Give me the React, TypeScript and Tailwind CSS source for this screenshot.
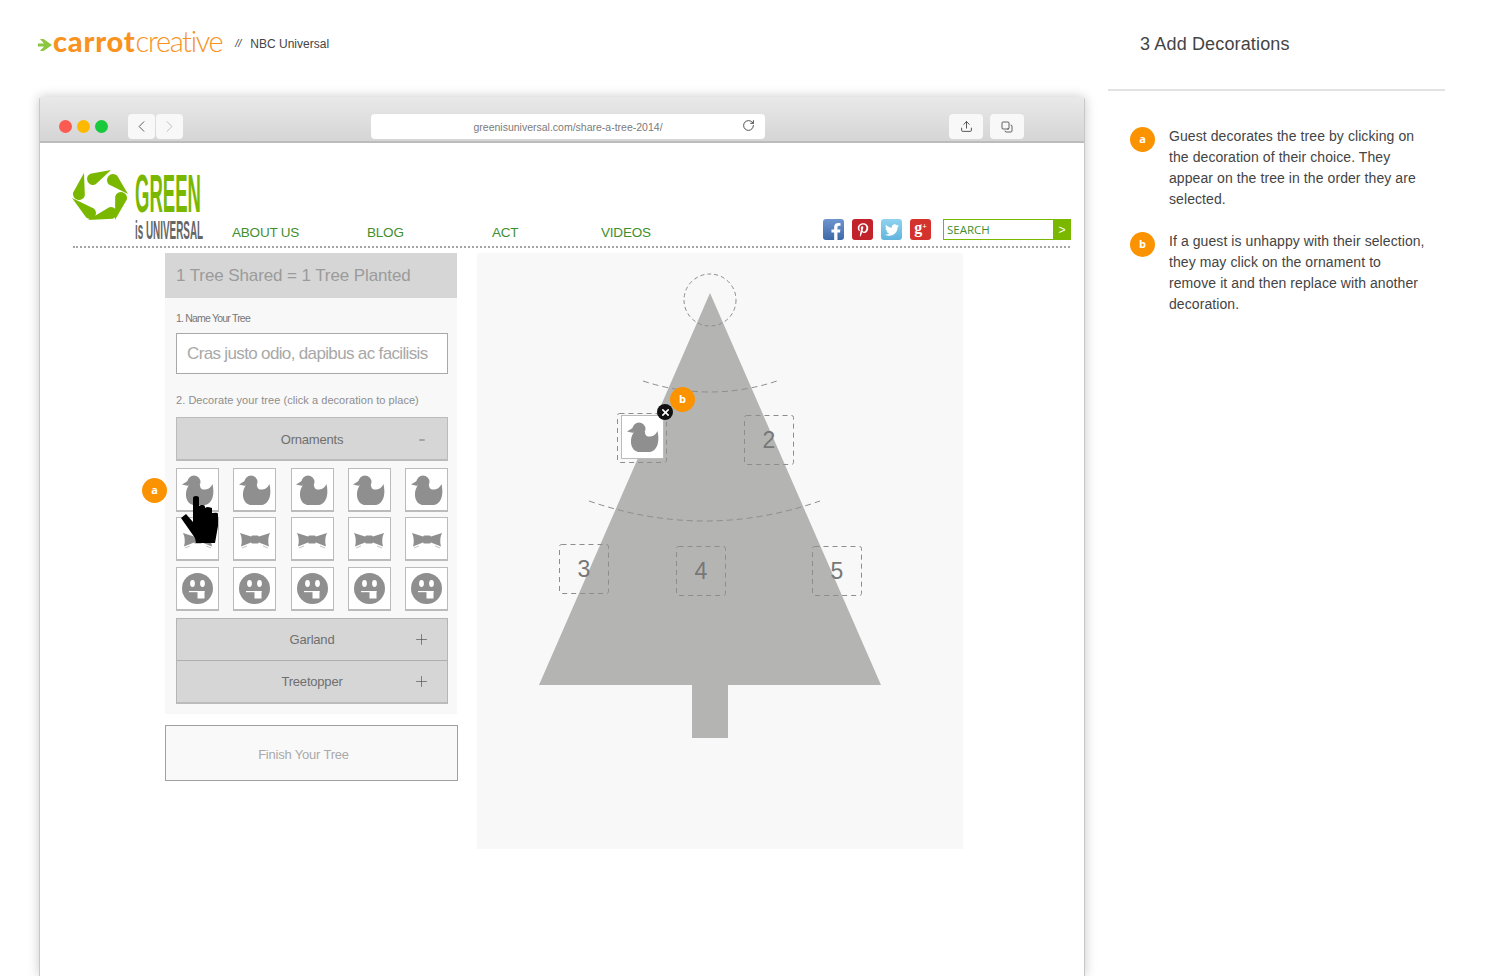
import { ChevronLeft, ChevronRight, Copy, Minus, Plus, RotateCw, Upload } from 'lucide-react'
import { FaFacebookF, FaPinterestP, FaTwitter } from 'react-icons/fa'

const sans = "font-['Liberation_Sans',Arial,sans-serif]"

// tip / round-end pairs for the six petals, in the logo's own coordinates
const petals = [
  [39, 0, 21, 9],
  [56, 24, 41, 10],
  [43, 50, 49, 28],
  [16, 50, 39, 43],
  [0, 28, 18, 43],
  [12, 3, 7, 24],
]

function petalPath([tx, ty, cx, cy]: number[]) {
  const r = 6
  const dx = cx - tx
  const dy = cy - ty
  const len = Math.hypot(dx, dy)
  const px = (-dy / len) * r
  const py = (dx / len) * r
  return `M${tx} ${ty} L${cx + px} ${cy + py} A${r} ${r} 0 1 0 ${cx - px} ${cy - py} Z`
}

function PetalLogo() {
  return (
    <svg width="56" height="52" viewBox="0 0 56 52" className="mt-[-2px] shrink-0">
      {petals.map((p) => (
        <path key={p.join()} d={petalPath(p)} fill="#7ab800" />
      ))}
    </svg>
  )
}

function Duck() {
  return (
    <svg width="32" height="30" viewBox="0 0 32 30" fill="#8f8f8f">
      <circle cx="12" cy="7" r="6.5" />
      <path d="M6.5 5.5 L0 9.5 L6.5 11 Z" />
      <path d="M7 10 C2 17 3 28 11 30 L23 30 C30 29 33 20 30.5 9 C28 14 24 15 21 14.5 C19 14 18 12.5 18 10 Z" />
    </svg>
  )
}

function Bow() {
  return (
    <svg width="30" height="17" viewBox="0 0 30 17" className="mt-[3px]">
      <path d="M0 1 L11 4.5 V10.5 L1 14.5 Q3 7 0 1 Z" fill="#8f8f8f" />
      <path d="M30 1 L19 4.5 V10.5 L29 14.5 Q27 7 30 1 Z" fill="#8f8f8f" />
      <rect x="11" y="3.5" width="8" height="8" rx="1.5" fill="#8f8f8f" />
      <path d="M2 16 L7 14 M28 16 L23 14" stroke="#c4c4c4" strokeWidth="1" />
    </svg>
  )
}

function Face() {
  return (
    <svg width="31" height="31" viewBox="0 0 31 31">
      <circle cx="15.5" cy="15.5" r="15.5" fill="#8f8f8f" />
      <ellipse cx="10.5" cy="10.5" rx="2.4" ry="3.4" fill="#fff" />
      <ellipse cx="20.5" cy="10.5" rx="2.4" ry="3.4" fill="#fff" />
      <rect x="7" y="18" width="15.5" height="1.2" fill="#fff" />
      <rect x="15.5" y="18" width="7" height="7.5" fill="#fff" />
    </svg>
  )
}

function Hand() {
  return (
    <svg width="38" height="48" viewBox="0 0 38 48" fill="#000">
      <path d="M12 2 Q12 0 15 0 Q18 0 18 2 V10 L20 9 Q20 9 22 9 Q24 9 24 11 V12 L26 11 Q28 11 31 12 V17 L32 17 Q37 16 37 18 L37 30 L34 47 L15 47 L14 42 L0 22 L5 18 L12 26 Z" />
    </svg>
  )
}

function Tile({ children, className = '' }: { children: React.ReactNode; className?: string }) {
  return (
    <div
      className={`flex h-[44px] w-[43px] items-center justify-center border border-[#bbbbbb] border-b-2 bg-white ${className}`}
    >
      {children}
    </div>
  )
}

function Badge({ label, className = '' }: { label: string; className?: string }) {
  return (
    <div
      className={`flex h-[25px] w-[25px] items-center justify-center rounded-full bg-[#fb9300] text-[11px] font-bold text-white font-['Open_Sans',sans-serif] ${className}`}
    >
      {label}
    </div>
  )
}

function Slot({ n, className }: { n: string; className: string }) {
  return (
    <div
      className={`absolute flex h-[50px] w-[50px] items-center justify-center text-[23px] text-[#777777] ${className}`}
    >
      <svg width="50" height="50" viewBox="0 0 50 50" className="absolute inset-0">
        <rect x="0.5" y="0.5" width="49" height="49" rx="2" fill="none" stroke="#8d8d8d" strokeDasharray="5 4" />
      </svg>
      {n}
    </div>
  )
}

function Accordion({ label, last }: { label: string; last?: boolean }) {
  return (
    <div
      className={`relative flex items-center justify-center text-[13px] tracking-[-0.2px] text-[#6f6f6f] ${last ? 'h-[43px] border-b-2 border-[#bbbbbb]' : 'h-[42px] border-b border-[#aeaeae]'}`}
    >
      {label}
      <Plus size={17} strokeWidth={1} className="absolute right-[17px] text-[#555555]" />
    </div>
  )
}

function Toolbtn({ children, className = '' }: { children: React.ReactNode; className?: string }) {
  return (
    <div className={`flex h-[25px] items-center justify-center rounded-[4px] bg-[#f8f8f8] ${className}`}>
      {children}
    </div>
  )
}

function SocialIcon({ children, className }: { children: React.ReactNode; className: string }) {
  return (
    <div className={`flex h-[21px] w-[21px] items-center justify-center rounded-[3px] text-white ${className}`}>
      {children}
    </div>
  )
}

function Note({ label, lines, className = '' }: { label: string; lines: string[]; className?: string }) {
  return (
    <div className={`flex gap-[14px] pl-[22px] ${className}`}>
      <Badge label={label} className="mt-[-1px] shrink-0" />
      <p className="mt-[-2px] text-[14px] leading-[21px] tracking-[0.08px] text-[#444444]">
        {lines.map((l) => (
          <span key={l} className="block whitespace-nowrap">
            {l}
          </span>
        ))}
      </p>
    </div>
  )
}

export default function App() {
  return (
    <div className={`flex h-[976px] w-[1490px] overflow-hidden bg-white ${sans}`}>
      <div className="flex w-[1108px] shrink-0 flex-col">
        <header className="flex h-[97px] shrink-0 items-center pb-[11px] pl-[38px]">
          <svg width="15" height="14" viewBox="0 0 15 14" className="mt-[4px] shrink-0">
            <path d="M0 5.5 H6 L2 1 H5.5 L14 7 L5.5 13 H2 L6 8.5 H0 Z" fill="#8cc63f" />
          </svg>
          <span className="mt-[-5px] text-[29px] leading-none tracking-[0.8px] text-[#f7931e] font-['Lato',sans-serif] font-black">
            carrot
          </span>
          <span className="mt-[-5px] text-[29px] leading-none tracking-[-1.4px] text-[#f7931e] font-['Lato',sans-serif] font-light">
            creative
          </span>
          <span className="mt-[1px] ml-[13px] text-[11px] text-[#444444] italic">//</span>
          <span className="mt-[1px] ml-[9px] text-[12px] text-[#444444]">NBC Universal</span>
        </header>

        <div className="ml-[39px] flex h-[879px] w-[1046px] shrink-0 flex-col rounded-t-[3px] border-x border-[#c8c8c8] shadow-[0_0_12px_rgba(0,0,0,0.22)]">
          <div className="flex h-[46px] shrink-0 items-end rounded-t-[3px] border-b-2 border-[#bcbcbc] bg-linear-to-b from-[#e9e9e9] to-[#d5d5d5] pb-[2px] pl-[19px]">
            <div className="mb-[6px] flex gap-[5px]">
              <span className="h-[13px] w-[13px] rounded-full bg-[#fb5b50]" />
              <span className="h-[13px] w-[13px] rounded-full bg-[#fdb900]" />
              <span className="h-[13px] w-[13px] rounded-full bg-[#19c93c]" />
            </div>
            <div className="ml-[20px] flex gap-[1px]">
              <Toolbtn className="w-[27px]">
                <ChevronLeft size={19} strokeWidth={1.1} className="text-[#444444]" />
              </Toolbtn>
              <Toolbtn className="w-[27px]">
                <ChevronRight size={19} strokeWidth={1.1} className="text-[#b5b5b5]" />
              </Toolbtn>
            </div>
            <div className="relative ml-[188px] flex h-[25px] w-[394px] items-center justify-center rounded-[4px] bg-white pt-[3px] text-[10.5px] text-[#7b7b7b]">
              greenisuniversal.com/share-a-tree-2014/
              <RotateCw size={13} strokeWidth={1.7} className="absolute top-[5px] right-[10px] text-[#444444]" />
            </div>
            <Toolbtn className="ml-[184px] w-[34px]">
              <Upload size={13} strokeWidth={1.5} className="text-[#333333]" />
            </Toolbtn>
            <Toolbtn className="ml-[7px] w-[34px]">
              <Copy size={12} strokeWidth={1.5} className="-scale-100 text-[#333333]" />
            </Toolbtn>
          </div>

          <div className="flex h-[103px] shrink-0 items-end pr-[13px] pl-[32px]">
            <div className="flex w-[160px] shrink-0 items-start pb-[4px]">
              <PetalLogo />
              <div className="ml-[7px] flex w-[68px] flex-col">
                <span className="mt-[1px] w-[68px] origin-left scale-x-[0.35] text-[53px] leading-[42px] font-bold whitespace-nowrap text-[#7ab800]">
                  GREEN
                </span>
                <span className="mt-[3px] w-[68px] origin-left scale-x-[0.38] text-[26px] leading-[24px] font-bold whitespace-nowrap text-[#666666]">
                  is UNIVERSAL
                </span>
              </div>
            </div>
            <nav className="flex pb-[5px] text-[13.5px] leading-[16px] tracking-[-0.2px] text-[#3f8f2f]">
              <span className="w-[135px]">ABOUT US</span>
              <span className="w-[125px]">BLOG</span>
              <span className="w-[109px]">ACT</span>
              <span>VIDEOS</span>
            </nav>
            <div className="ml-auto flex items-center pb-[6px]">
              <div className="flex gap-[8px]">
                <SocialIcon className="overflow-hidden bg-linear-to-b from-[#6d96d0] to-[#3f68a8]">
                  <FaFacebookF size={17} className="mt-[4px] ml-[5px]" />
                </SocialIcon>
                <SocialIcon className="bg-[#c2222a]">
                  <FaPinterestP size={14} />
                </SocialIcon>
                <SocialIcon className="bg-linear-to-b from-[#8fd3ef] to-[#62b4dd]">
                  <FaTwitter size={14} />
                </SocialIcon>
                <SocialIcon className="bg-[#d4322c] font-['Liberation_Serif',serif] text-[16px] leading-none font-bold">
                  <span className="mt-[-3px]">g</span>
                  <span className="mb-[6px] text-[8px]">+</span>
                </SocialIcon>
              </div>
              <div className="ml-[12px] flex h-[21px] w-[128px] border border-[#7ab800] bg-white">
                <span className="flex-1 pl-[3px] text-[11.5px] leading-[19px] text-[#3f8f2f] font-['Open_Sans',sans-serif]">
                  SEARCH
                </span>
                <span className="-my-px -mr-px flex w-[18px] items-center justify-center bg-[#7ab800] text-[12px] text-white">
                  &gt;
                </span>
              </div>
            </div>
          </div>
          <div className="mr-[14px] ml-[33px] h-[2px] shrink-0 border-b-2 border-dotted border-[#a5a5a5]" />

          <div className="mt-[5px] flex items-start pl-[125px]">
            <div className="flex w-[293px] shrink-0 flex-col">
              <div className="mr-[1px] bg-[#f8f8f8]">
                <div className="flex h-[45px] items-center bg-[#d6d6d6] pl-[11px] text-[17px] tracking-[-0.1px] text-[#9b9b9b]">
                  1 Tree Shared = 1 Tree Planted
                </div>
                <div className="flex flex-col pr-[9px] pb-[10px] pl-[11px]">
                  <label className="mt-[14px] text-[10.5px] leading-[12px] tracking-[-0.8px] text-[#777777]">
                    1. Name Your Tree
                  </label>
                  <div className="mt-[9px] flex h-[41px] items-center border border-[#a8a8a8] bg-white pl-[10px] text-[17px] tracking-[-0.65px] text-[#a8a8a8]">
                    Cras justo odio, dapibus ac facilisis
                  </div>
                  <label className="mt-[20px] text-[11px] leading-[12px] tracking-[0.05px] text-[#8e8e8e]">
                    2. Decorate your tree (click a decoration to place)
                  </label>
                  <div className="relative mt-[11px] flex h-[44px] items-center justify-center border border-[#bbbbbb] border-b-2 bg-[#d6d6d6] pt-[2px] text-[13px] tracking-[-0.2px] text-[#6f6f6f]">
                    Ornaments
                    <Minus size={8} strokeWidth={2} className="absolute right-[21px] text-[#444444]" />
                  </div>

                  <div className="relative mt-[7px] flex flex-col">
                    <Badge label="a" className="absolute top-[10px] left-[-34px]" />
                    <div className="flex justify-between">
                      {['d1', 'd2', 'd3', 'd4', 'd5'].map((k) => (
                        <Tile key={k}>
                          <Duck />
                        </Tile>
                      ))}
                    </div>
                    <div className="mt-[5px] flex justify-between">
                      {['b1', 'b2', 'b3', 'b4', 'b5'].map((k) => (
                        <Tile key={k}>
                          <Bow />
                        </Tile>
                      ))}
                    </div>
                    <div className="mt-[6px] flex justify-between">
                      {['f1', 'f2', 'f3', 'f4', 'f5'].map((k) => (
                        <Tile key={k}>
                          <Face />
                        </Tile>
                      ))}
                    </div>
                    <div className="absolute top-[28px] left-[5px]">
                      <Hand />
                    </div>
                  </div>

                  <div className="mt-[7px] flex flex-col border-x border-t border-[#b5b5b5] bg-[#d6d6d6]">
                    <Accordion label="Garland" />
                    <Accordion label="Treetopper" last />
                  </div>
                </div>
              </div>
              <div className="mt-[11px] flex h-[56px] items-center justify-center border border-[#a0a0a0] bg-[#f9f9f9] pt-[3px] pr-[16px] text-[13px] tracking-[-0.2px] text-[#a9a9a9]">
                Finish Your Tree
              </div>
            </div>

            <div className="relative ml-[19px] h-[596px] w-[486px] shrink-0 bg-[#f8f8f8]">
              <svg width="486" height="596" viewBox="0 0 486 596" className="absolute inset-0">
                <path d="M233 40 L404 432 H251 V485 H215 V432 H62 Z" fill="#b4b5b3" />
                <circle cx="233" cy="47" r="26" fill="none" stroke="#8d8d8d" strokeDasharray="4 3" />
                <path d="M166 128 Q233 150 300 128" fill="none" stroke="#8d8d8d" strokeDasharray="6 4" />
                <path d="M112 248 Q228 288 343 248" fill="none" stroke="#8d8d8d" strokeDasharray="6 4" />
              </svg>
              <Slot n="" className="top-[160px] left-[140px]" />
              <Tile className="absolute top-[162px] left-[144px] !border-b">
                <Duck />
              </Tile>
              <div className="absolute top-[151px] left-[180px] flex h-[16px] w-[16px] items-center justify-center rounded-full bg-[#111111]">
                <Plus size={13} strokeWidth={3} className="rotate-45 text-white" />
              </div>
              <Badge label="b" className="absolute top-[134px] left-[193px]" />
              <Slot n="2" className="top-[162px] left-[267px]" />
              <Slot n="3" className="top-[291px] left-[82px]" />
              <Slot n="4" className="top-[293px] left-[199px]" />
              <Slot n="5" className="top-[293px] left-[335px]" />
            </div>
          </div>
        </div>
      </div>

      <aside className="flex w-[337px] shrink-0 flex-col">
        <h1 className="flex h-[91px] items-center border-b-2 border-[#e2e2e2] pl-[32px] text-[18px] tracking-[0.15px] text-[#444444]">
          3 Add Decorations
        </h1>
        <Note
          className="mt-[37px]"
          label="a"
          lines={[
            'Guest decorates the tree by clicking on',
            'the decoration of their choice. They',
            'appear on the tree in the order they are',
            'selected.',
          ]}
        />
        <Note
          className="mt-[23px]"
          label="b"
          lines={[
            'If a guest is unhappy with their selection,',
            'they may click on the ornament to',
            'remove it and then replace with another',
            'decoration.',
          ]}
        />
      </aside>
    </div>
  )
}
